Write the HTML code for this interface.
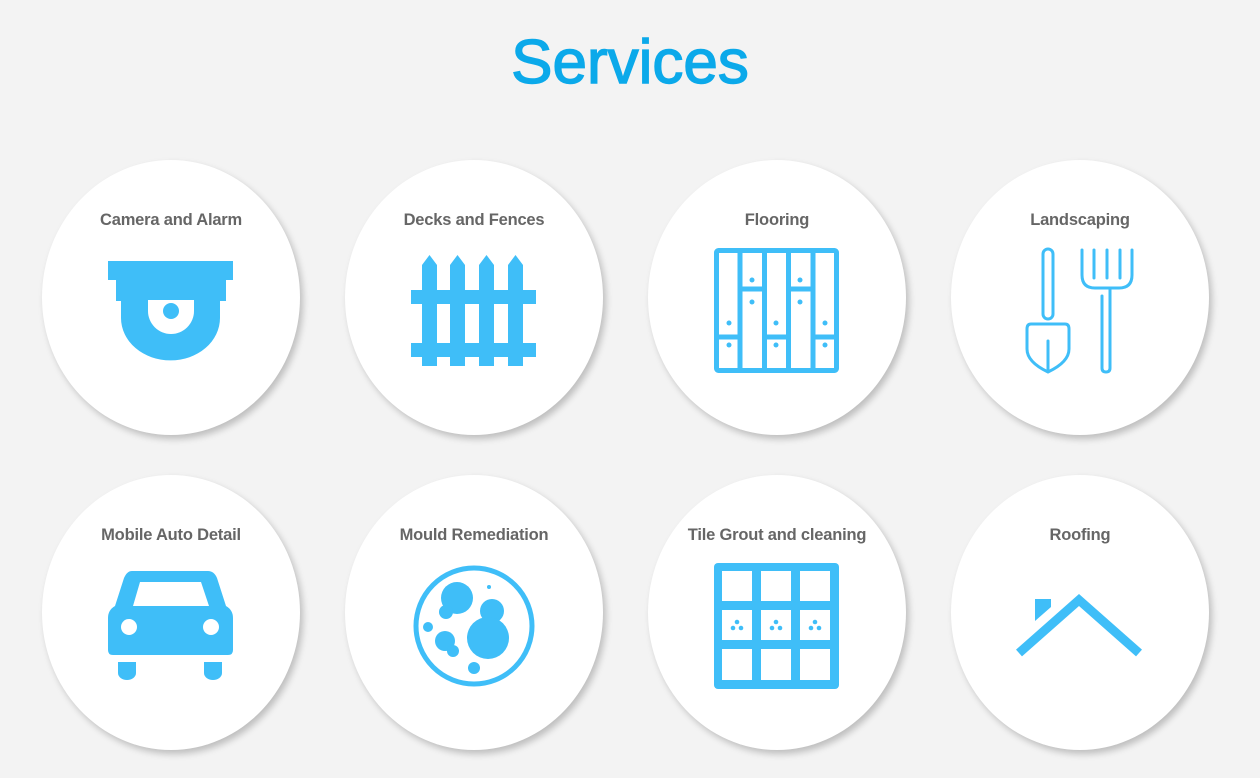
<!DOCTYPE html>
<html><head><meta charset="utf-8"><style>
html,body{margin:0;padding:0;background:#f3f3f3;width:1260px;height:778px;overflow:hidden;font-family:"Liberation Sans",sans-serif}
h1{position:absolute;left:0;width:1260px;top:27px;margin:0;text-align:center;font-size:62px;font-weight:normal;color:#0ba9ea;-webkit-text-stroke:1.4px #0ba9ea;letter-spacing:0px}
.c{position:absolute;width:258px;height:275px;border-radius:50%;background:#fff;box-shadow:3px 4px 7px rgba(0,0,0,.22)}
.l{position:absolute;width:300px;text-align:center;font-size:16.5px;font-weight:bold;color:#666;letter-spacing:-0.2px}
svg{position:absolute;left:0;top:0}
</style></head><body>
<h1>Services</h1>
<div class="c" style="left:42px;top:160px"></div>
<div class="c" style="left:345px;top:160px"></div>
<div class="c" style="left:648px;top:160px"></div>
<div class="c" style="left:951px;top:160px"></div>
<div class="c" style="left:42px;top:475px"></div>
<div class="c" style="left:345px;top:475px"></div>
<div class="c" style="left:648px;top:475px"></div>
<div class="c" style="left:951px;top:475px"></div>
<div class="l" style="left:21px;top:211px">Camera and Alarm</div>
<div class="l" style="left:324px;top:211px">Decks and Fences</div>
<div class="l" style="left:627px;top:211px">Flooring</div>
<div class="l" style="left:930px;top:211px">Landscaping</div>
<div class="l" style="left:21px;top:526px">Mobile Auto Detail</div>
<div class="l" style="left:324px;top:526px">Mould Remediation</div>
<div class="l" style="left:627px;top:526px">Tile Grout and cleaning</div>
<div class="l" style="left:930px;top:526px">Roofing</div>
<svg width="1260" height="778" viewBox="0 0 1260 778">
<g fill="#3fbef8">
<rect x="108" y="261" width="125" height="19"/>
<rect x="116" y="279" width="110" height="22"/>
<path d="M121 300 H220 V318 A49 42 0 0 1 121 318 Z"/>
<path d="M148 300 H194 V311 A23 23 0 0 1 148 311 Z" fill="#fff"/>
<circle cx="171" cy="311" r="8"/>
<path d="M422 265 L429.5 255 L437 265 V366 H422 Z"/>
<path d="M450 265 L457.5 255 L465 265 V366 H450 Z"/>
<path d="M479 265 L486.5 255 L494 265 V366 H479 Z"/>
<path d="M508 265 L515.5 255 L523 265 V366 H508 Z"/>
<rect x="411" y="290" width="125" height="14"/>
<rect x="411" y="343" width="125" height="14"/>
<path d="M132 571 H208 Q214 571 217 578 L226 606 Q233 610 233 618 V650 Q233 655 228 655 H113 Q108 655 108 650 V618 Q108 610 115 606 L124 578 Q127 571 132 571 Z"/>
<path d="M140 582 H201 L209 606 H133 Z" fill="#fff"/>
<circle cx="129" cy="627" r="8" fill="#fff"/>
<circle cx="211" cy="627" r="8" fill="#fff"/>
<path d="M118 662 H136 V673 A9 7 0 0 1 118 673 Z"/>
<path d="M204 662 H222 V673 A9 7 0 0 1 204 673 Z"/>
<circle cx="457" cy="598" r="16"/><circle cx="446" cy="612" r="7"/>
<circle cx="492" cy="611" r="12"/><circle cx="488" cy="638" r="21"/>
<circle cx="445" cy="641" r="10"/><circle cx="453" cy="651" r="6"/>
<circle cx="428" cy="627" r="5"/><circle cx="474" cy="668" r="6"/><circle cx="489" cy="587" r="2"/>
<rect x="714" y="563" width="125" height="126" rx="4"/>
<g fill="#fff">
<rect x="722" y="571" width="30" height="30"/><rect x="761" y="571" width="30" height="30"/><rect x="800" y="571" width="30" height="30"/>
<rect x="722" y="610" width="30" height="30"/><rect x="761" y="610" width="30" height="30"/><rect x="800" y="610" width="30" height="30"/>
<rect x="722" y="649" width="30" height="31"/><rect x="761" y="649" width="30" height="31"/><rect x="800" y="649" width="30" height="31"/>
</g>
<circle cx="737" cy="622" r="2.3"/><circle cx="733" cy="628" r="2.3"/><circle cx="741" cy="628" r="2.3"/>
<circle cx="776" cy="622" r="2.3"/><circle cx="772" cy="628" r="2.3"/><circle cx="780" cy="628" r="2.3"/>
<circle cx="815" cy="622" r="2.3"/><circle cx="811" cy="628" r="2.3"/><circle cx="819" cy="628" r="2.3"/>
<path d="M1035 599 H1051 V607 L1035 621 Z"/>
<circle cx="752" cy="280" r="2.5"/><circle cx="752" cy="302" r="2.5"/>
<circle cx="800" cy="280" r="2.5"/><circle cx="800" cy="302" r="2.5"/>
<circle cx="729" cy="323" r="2.5"/><circle cx="729" cy="345" r="2.5"/>
<circle cx="776" cy="323" r="2.5"/><circle cx="776" cy="345" r="2.5"/>
<circle cx="825" cy="323" r="2.5"/><circle cx="825" cy="345" r="2.5"/>
</g>
<g fill="none" stroke="#3fbef8">
<circle cx="474" cy="626" r="58" stroke-width="5"/>
<polyline points="1019,653 1079,600 1139,653" stroke-width="9"/>
<rect x="716.5" y="250.5" width="120" height="120" rx="2" stroke-width="5"/>
<g stroke-width="5">
<line x1="740" y1="250" x2="740" y2="371"/><line x1="764.5" y1="250" x2="764.5" y2="371"/>
<line x1="788.5" y1="250" x2="788.5" y2="371"/><line x1="813" y1="250" x2="813" y2="371"/>
<line x1="740" y1="289" x2="765" y2="289"/><line x1="788" y1="289" x2="813" y2="289"/>
<line x1="716" y1="337" x2="740" y2="337"/><line x1="764" y1="337" x2="789" y2="337"/><line x1="813" y1="337" x2="837" y2="337"/>
</g>
<g stroke-width="3" stroke-linecap="round" stroke-linejoin="round">
<rect x="1043" y="249" width="10" height="70" rx="5"/>
<path d="M1031 324 H1065 Q1069 324 1069 329 V349 Q1069 362 1048 372 Q1027 362 1027 349 V329 Q1027 324 1031 324 Z"/>
<line x1="1048" y1="341" x2="1048" y2="370"/>
<path d="M1082 250 V275 Q1082 288 1095 288 H1119 Q1132 288 1132 275 V250"/>
<line x1="1094" y1="250" x2="1094" y2="278"/><line x1="1107" y1="250" x2="1107" y2="278"/><line x1="1120" y1="250" x2="1120" y2="278"/>
<path d="M1102 296 V368 Q1102 372 1106 372 Q1110 372 1110 368 V288"/>
</g>
</g>
</svg>
</body></html>
